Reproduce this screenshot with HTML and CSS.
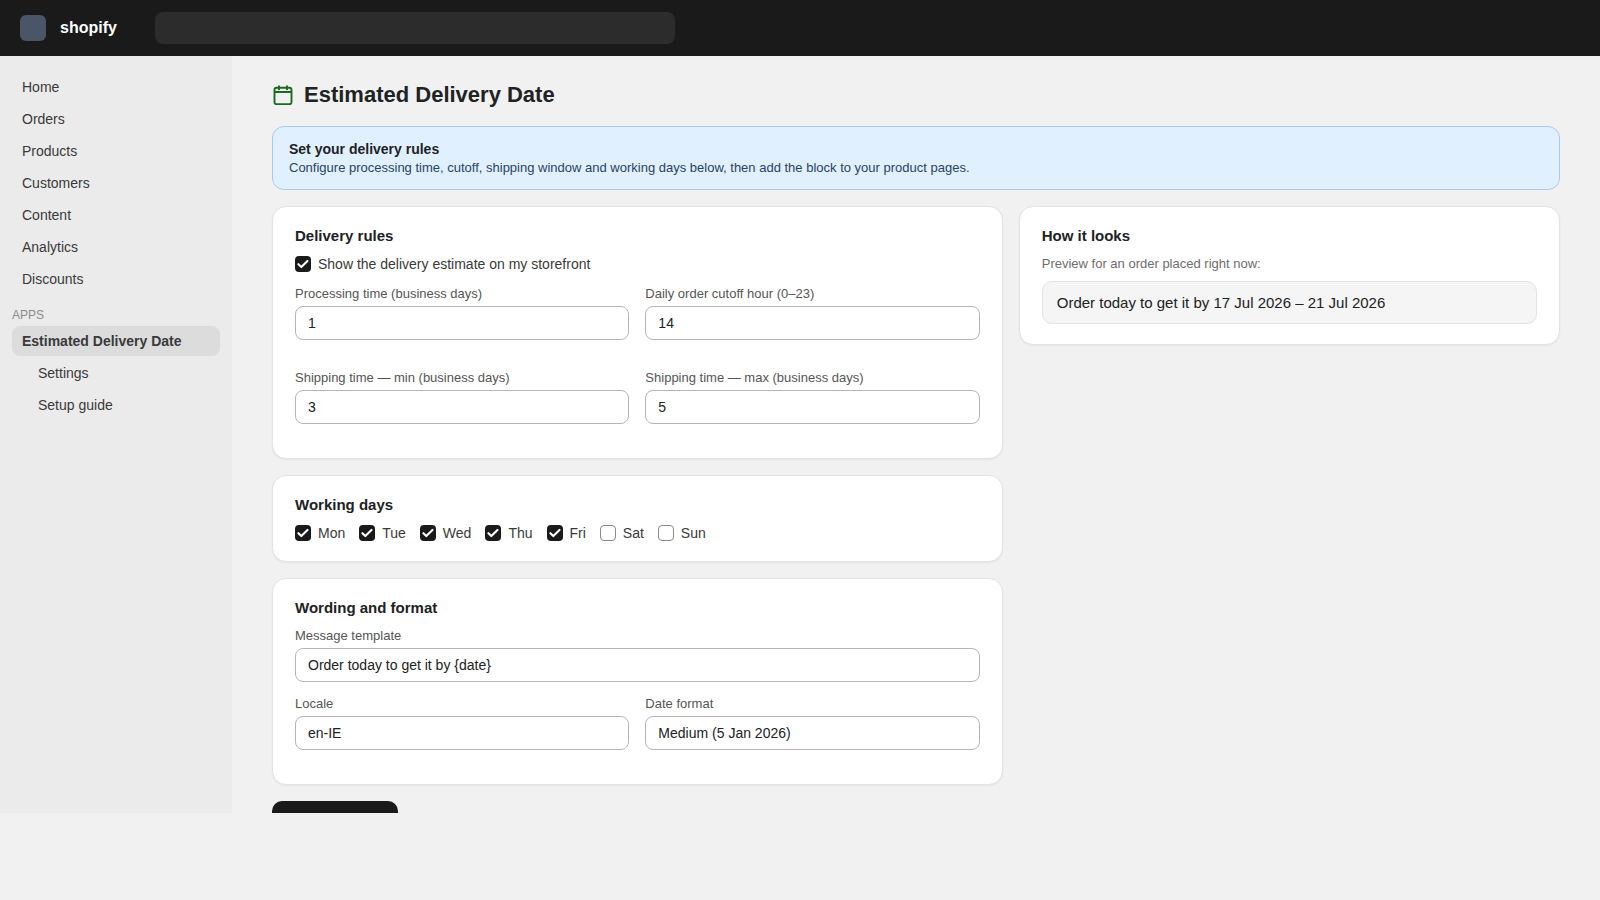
FILE: index.html
```html
<!DOCTYPE html>
<html lang="en">
<head>
<meta charset="utf-8">
<title>Estimated Delivery Date</title>
<link rel="stylesheet" href="styles.css">
</head>
<body>
<div class="app">
  <header class="topbar">
    <div class="logo"></div>
    <div class="brand">shopify</div>
    <div class="search"></div>
  </header>
  <div class="body">
    <nav class="sidebar">
      <a class="nav">Home</a>
      <a class="nav">Orders</a>
      <a class="nav">Products</a>
      <a class="nav">Customers</a>
      <a class="nav">Content</a>
      <a class="nav">Analytics</a>
      <a class="nav">Discounts</a>
      <div class="section">APPS</div>
      <a class="nav active">Estimated Delivery Date</a>
      <a class="nav sub">Settings</a>
      <a class="nav sub">Setup guide</a>
    </nav>
    <main class="main">
      <div class="title-row">
        <svg class="cal" width="20" height="20" viewBox="0 0 20 20" fill="none" stroke="#1a6b1f" stroke-width="1.9"><rect x="1.5" y="2.8" width="17" height="16.4" rx="2"/><path d="M1.5 7h17M6 .6v4.4M14 .6v4.4"/></svg>
        <h1>Estimated Delivery Date</h1>
      </div>
      <div class="banner">
        <div class="banner-title">Set your delivery rules</div>
        <div class="banner-text">Configure processing time, cutoff, shipping window and working days below, then add the block to your product pages.</div>
      </div>
      <div class="columns">
        <div class="left">
          <section class="card rules">
            <h2>Delivery rules</h2>
            <label class="check-row show"><span class="box on"><svg class="tick" width="16" height="16" viewBox="0 0 16 16"><path d="M3.4 8.2l2.9 2.9 6.2-6.2"/></svg></span>Show the delivery estimate on my storefront</label>
            <div class="fields two">
              <div class="field"><label>Processing time (business days)</label><div class="input">1</div></div>
              <div class="field"><label>Daily order cutoff hour (0–23)</label><div class="input">14</div></div>
              <div class="field"><label>Shipping time — min (business days)</label><div class="input">3</div></div>
              <div class="field"><label>Shipping time — max (business days)</label><div class="input">5</div></div>
            </div>
          </section>
          <section class="card days">
            <h2>Working days</h2>
            <div class="day-row">
              <label class="check-row"><span class="box on"><svg class="tick" width="16" height="16" viewBox="0 0 16 16"><path d="M3.4 8.2l2.9 2.9 6.2-6.2"/></svg></span>Mon</label>
              <label class="check-row"><span class="box on"><svg class="tick" width="16" height="16" viewBox="0 0 16 16"><path d="M3.4 8.2l2.9 2.9 6.2-6.2"/></svg></span>Tue</label>
              <label class="check-row"><span class="box on"><svg class="tick" width="16" height="16" viewBox="0 0 16 16"><path d="M3.4 8.2l2.9 2.9 6.2-6.2"/></svg></span>Wed</label>
              <label class="check-row"><span class="box on"><svg class="tick" width="16" height="16" viewBox="0 0 16 16"><path d="M3.4 8.2l2.9 2.9 6.2-6.2"/></svg></span>Thu</label>
              <label class="check-row"><span class="box on"><svg class="tick" width="16" height="16" viewBox="0 0 16 16"><path d="M3.4 8.2l2.9 2.9 6.2-6.2"/></svg></span>Fri</label>
              <label class="check-row"><span class="box"></span>Sat</label>
              <label class="check-row"><span class="box"></span>Sun</label>
            </div>
          </section>
          <section class="card wording">
            <h2>Wording and format</h2>
            <div class="field message"><label>Message template</label><div class="input">Order today to get it by {date}</div></div>
            <div class="fields two tight">
              <div class="field"><label>Locale</label><div class="input">en-IE</div></div>
              <div class="field"><label>Date format</label><div class="input">Medium (5 Jan 2026)</div></div>
            </div>
          </section>
          <button class="save"></button>
        </div>
        <section class="card preview">
          <h2>How it looks</h2>
          <p class="muted">Preview for an order placed right now:</p>
          <div class="preview-box">Order today to get it by 17 Jul 2026 – 21 Jul 2026</div>
        </section>
      </div>
    </main>
  </div>
</div>
</body>
</html>
```
FILE: styles.css
```css
* { box-sizing: border-box; }
html, body { margin: 0; height: 100%; background: #f1f1f1; }
body { font-family: "Liberation Sans", Arial, sans-serif; color: #202223; font-size: 14px; }
.app { height: 813px; overflow: hidden; display: flex; flex-direction: column; }
.topbar { height: 56px; flex: none; background: #1a1a1a; display: flex; align-items: center; padding: 0 20px; }
.logo { width: 26px; height: 26px; border-radius: 6px; background: #4a5568; }
.brand { color: #fff; font-weight: 700; font-size: 16px; margin-left: 14px; }
.search { width: 520px; height: 32px; margin-left: 38px; border-radius: 8px; background: #2c2c2c; }
.body { flex: 1; display: flex; min-height: 0; }
.sidebar { width: 232px; flex: none; background: #ebebeb; padding: 16px 12px; display: flex; flex-direction: column; gap: 2px; }
.nav { height: 30px; display: flex; align-items: center; padding: 0 10px; border-radius: 8px; color: #3a3a3a; }
.nav.active { background: #dcdcdc; font-weight: 700; }
.nav.sub { padding-left: 26px; }
.section { font-size: 12px; color: #8a8a8a; margin-top: 10px; height: 18px; line-height: 18px; }
.main { flex: 1; min-width: 0; padding: 25px 40px 24px; }
.title-row { display: flex; align-items: center; gap: 11px; height: 28px; margin-bottom: 17px; }
.cal { flex: none; margin-left: 1px; }
h1 { margin: 0; font-size: 22px; font-weight: 700; }
.banner { height: 64px; border: 1px solid #a8c8f0; border-radius: 12px; background: #e0f0ff; padding: 13px 16px; margin-bottom: 16px; }
.banner-title { font-weight: 700; font-size: 14px; line-height: 18px; }
.banner-text { font-size: 13px; line-height: 20px; color: #2a4365; }
.columns { display: grid; grid-template-columns: 1.35fr 1fr; gap: 16px; align-items: start; }
.left { display: flex; flex-direction: column; gap: 16px; align-items: stretch; }
.card { background: #fff; border-radius: 14px; border: 1px solid #e3e3e3; box-shadow: 0 1px 2px rgba(0,0,0,.05); padding: 20px 22px 22px; }
h2 { margin: 0; font-size: 15px; font-weight: 700; line-height: 18px; }
.check-row { display: flex; align-items: center; gap: 7px; font-size: 14px; color: #3a3a3a; height: 16px; }
.show { margin-top: 11px; }
.box { width: 16px; height: 16px; border-radius: 4px; border: 1px solid #8a8a8a; background: #fff; display: flex; flex: none; }
.box.on { background: #1a1a1a; border: 0; }
.tick { fill: none; stroke: #fff; stroke-width: 2.1; stroke-linecap: round; stroke-linejoin: round; }
.fields.two { display: grid; grid-template-columns: 1fr 1fr; gap: 0 16px; margin-top: 13px; }
.field { margin-bottom: 29px; }
.fields.tight { margin-top: 0; }
.field.message { margin-bottom: 13px; margin-top: 10px; }
.field label { display: block; font-size: 13px; line-height: 18px; color: #555; margin-bottom: 3px; }
.input { height: 34px; border: 1px solid #b5b5b5; border-radius: 8px; padding: 0 12px; display: flex; align-items: center; background: #fff; font-size: 14px; color: #202223; }
.rules { height: 253px; }
.days { height: 87px; }
.day-row { display: flex; gap: 14px; margin-top: 11px; }
.wording { height: 207px; }
.save { width: 126px; height: 40px; background: #1a1a1a; border: 0; border-radius: 10px; flex: none; }
.preview { padding-bottom: 20px; }
.muted { margin: 11px 0 0; font-size: 13px; line-height: 16px; color: #6d6d6d; }
.preview-box { margin-top: 9px; height: 43px; border: 1px solid #e3e3e3; border-radius: 10px; background: #f5f5f5; padding: 0 14px; display: flex; align-items: center; font-size: 15px; }
```
